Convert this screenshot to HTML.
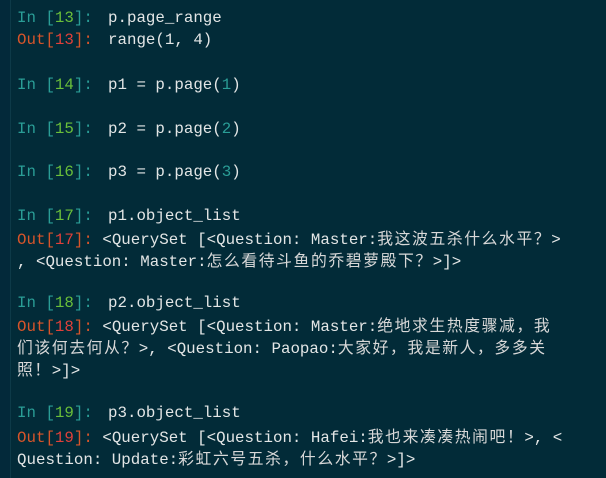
<!DOCTYPE html>
<html><head><meta charset="utf-8"><style>
html,body{margin:0;padding:0}
body{width:606px;height:478px;background:#022b38;overflow:hidden;position:relative;font-family:"Liberation Mono","Noto Sans CJK SC",monospace;font-size:15.8px;color:#e3e6e6}
.strip{position:absolute;left:0;top:0;width:10px;height:478px;background:#03293a;border-right:1px solid #0d3a48}
.l{position:absolute;left:17px;white-space:pre;line-height:22px;height:22px}
.p{display:inline-block;width:91px}
.t{color:#2a9d96}.g{color:#6abf3a}.o{color:#d8552a}.r{color:#e0403a}
.c{font-family:"Noto Sans CJK SC",sans-serif;letter-spacing:1.6px;color:#d8d8d8}
</style></head><body>
<div class="strip"></div>
<div class="l" style="top:7px"><span class="p"><span class="t">In [</span><span class="g">13</span><span class="t">]:</span></span>p.page_range</div>
<div class="l" style="top:29px"><span class="p"><span class="o">Out[</span><span class="r">13</span><span class="o">]:</span></span>range(1, 4)</div>
<div class="l" style="top:74px"><span class="p"><span class="t">In [</span><span class="g">14</span><span class="t">]:</span></span>p1 = p.page(<span class="t">1</span>)</div>
<div class="l" style="top:118px"><span class="p"><span class="t">In [</span><span class="g">15</span><span class="t">]:</span></span>p2 = p.page(<span class="t">2</span>)</div>
<div class="l" style="top:161px"><span class="p"><span class="t">In [</span><span class="g">16</span><span class="t">]:</span></span>p3 = p.page(<span class="t">3</span>)</div>
<div class="l" style="top:205px"><span class="p"><span class="t">In [</span><span class="g">17</span><span class="t">]:</span></span>p1.object_list</div>
<div class="l" style="top:227px"><span class="o">Out[</span><span class="r">17</span><span class="o">]: </span>&lt;QuerySet [&lt;Question: Master:<span class="c">我这波五杀什么水平？</span>&gt;</div>
<div class="l" style="top:249px">, &lt;Question: Master:<span class="c">怎么看待斗鱼的乔碧萝殿下？</span>&gt;]&gt;</div>
<div class="l" style="top:292px"><span class="p"><span class="t">In [</span><span class="g">18</span><span class="t">]:</span></span>p2.object_list</div>
<div class="l" style="top:314px"><span class="o">Out[</span><span class="r">18</span><span class="o">]: </span>&lt;QuerySet [&lt;Question: Master:<span class="c">绝地求生热度骤减，我</span></div>
<div class="l" style="top:336px"><span class="c">们该何去何从？</span>&gt;, &lt;Question: Paopao:<span class="c">大家好，我是新人，多多关</span></div>
<div class="l" style="top:358px"><span class="c">照！</span>&gt;]&gt;</div>
<div class="l" style="top:402px"><span class="p"><span class="t">In [</span><span class="g">19</span><span class="t">]:</span></span>p3.object_list</div>
<div class="l" style="top:425px"><span class="o">Out[</span><span class="r">19</span><span class="o">]: </span>&lt;QuerySet [&lt;Question: Hafei:<span class="c">我也来凑凑热闹吧！</span>&gt;, &lt;</div>
<div class="l" style="top:447px">Question: Update:<span class="c">彩虹六号五杀，什么水平？</span>&gt;]&gt;</div>
</body></html>
